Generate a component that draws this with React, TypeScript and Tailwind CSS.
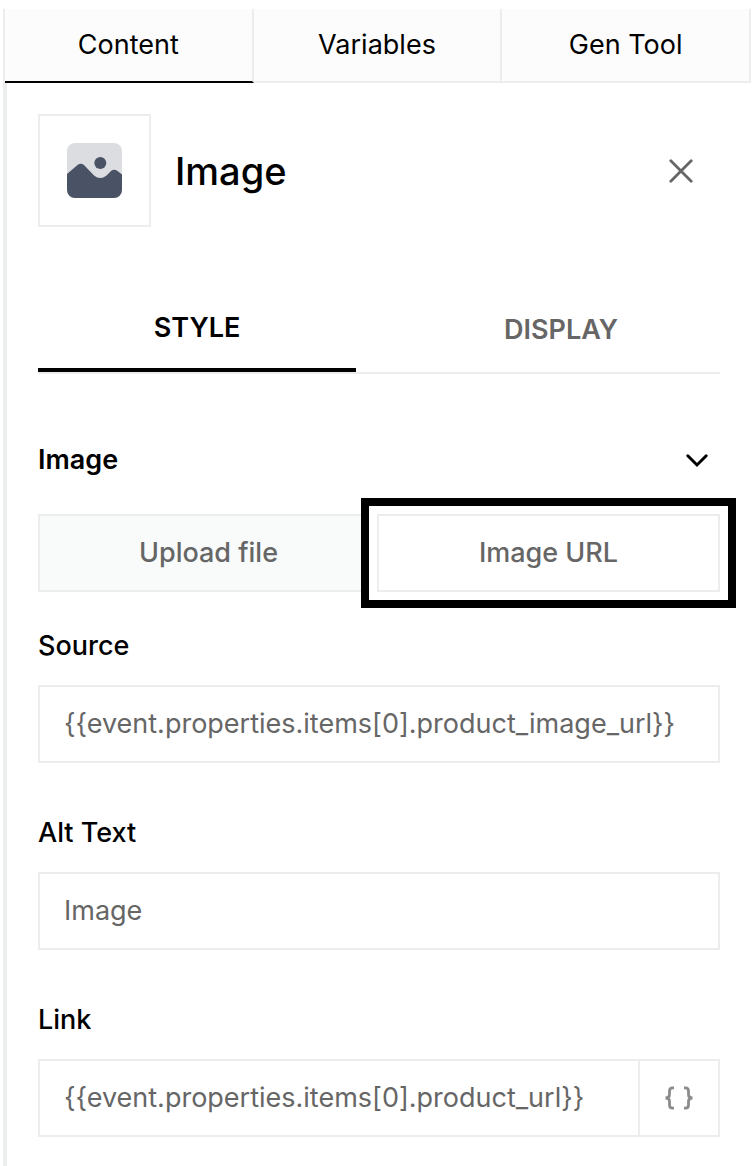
import { useState } from 'react'

const TABS = ['Content', 'Variables', 'Gen Tool']

function ImageGlyph() {
  return (
    <svg className="w-[55px] h-[55px]" viewBox="0 0 55 55" aria-hidden="true">
      <rect width="55" height="55" rx="8" fill="#dcdde0" />
      <path
        d="M0 31 L10.500 22 Q13.700 19.500 17 22 L27 32.500 Q33.300 37.500 39.500 32.500 L44 28 Q47.300 25.300 50.500 28 L55 31.500 V47 A8 8 0 0 1 47 55 H8 A8 8 0 0 1 0 47 Z"
        fill="#4a5365"
      />
      <circle cx="33.300" cy="20" r="6" fill="#4a5365" />
    </svg>
  )
}

function CloseIcon() {
  return (
    <svg className="w-6 h-6" viewBox="0 0 24 24" fill="none" stroke="#666" strokeWidth="2.8" strokeLinecap="round" aria-hidden="true">
      <path d="M1.800 1.800 L22.200 22.200 M22.200 1.800 L1.800 22.200" />
    </svg>
  )
}

function ChevronIcon() {
  return (
    <svg className="w-6 h-6" viewBox="0 0 24 24" fill="none" stroke="#000" strokeWidth="3" strokeLinecap="round" aria-hidden="true">
      <path d="M2.800 7.800 L12 17 L21.200 7.800" />
    </svg>
  )
}

function BracesIcon() {
  return (
    <svg className="w-[30px] h-6" viewBox="0 0 30 24" fill="none" stroke="#8c8c8c" strokeWidth="2.8" aria-hidden="true">
      <path d="M10 1.800 H8.500 Q5.500 1.800 5.500 5 V8.500 Q5.500 12 1.500 12 Q5.500 12 5.500 15.500 V19 Q5.500 22.200 8.500 22.200 H10" />
      <path d="M20 1.800 H21.500 Q24.500 1.800 24.500 5 V8.500 Q24.500 12 28.500 12 Q24.500 12 24.500 15.500 V19 Q24.500 22.200 21.500 22.200 H20" />
    </svg>
  )
}

interface FieldProps {
  id: string
  label: string
  initial: string
  withVariables?: boolean
}

function Field({ id, label, initial, withVariables }: FieldProps) {
  const [value, setValue] = useState(initial)

  return (
    <div className="flex flex-col gap-5">
      <label htmlFor={id} className="leading-[38px] font-medium">{label}</label>
      <div className="flex h-[78px] border-2 border-[#eceded]">
        <input
          id={id}
          type="text"
          value={value}
          onChange={e => setValue(e.target.value)}
          className="flex-1 min-w-0 px-6 text-[#666] outline-none"
        />
        {withVariables && (
          <button type="button" aria-label="Insert variable" className="w-20 border-l-2 border-[#eceded] flex items-center justify-center">
            <BracesIcon />
          </button>
        )}
      </div>
    </div>
  )
}

export default function App() {
  return (
    <div className="min-h-screen flex flex-col bg-white px-[3px] pt-[9px] text-[27px] text-black font-['Inter',sans-serif]">
      {/* Top tabs */}
      <nav className="flex h-[74px] border-l-2 border-[#eceded]">
        {TABS.map((tab, i) => (
          <button
            key={tab}
            type="button"
            className={`flex-1 bg-[#fcfcfc] border-r-2 border-b-2 border-r-[#eceded] ${i === 0 ? 'border-b-black' : 'border-b-[#eceded]'}`}
          >
            {tab}
          </button>
        ))}
      </nav>

      <main className="flex-1 border-l-4 border-[#eceded] pl-[31px] pr-[31px] pt-[31px] pb-7">
        {/* Header */}
        <header className="flex items-center">
          <div className="w-[113px] h-[113px] border-2 border-[#eceded] flex items-center justify-center">
            <ImageGlyph />
          </div>
          <h1 className="ml-6 flex-1 text-[38px] leading-none font-medium">Image</h1>
          <button type="button" aria-label="Close" className="mr-[27px]">
            <CloseIcon />
          </button>
        </header>

        {/* Style / Display */}
        <div className="mt-[62px] flex gap-[46px] h-[85px] border-b-2 border-[#eceded] font-semibold">
          <button type="button" className="flex-1 border-b-4 border-black">STYLE</button>
          <button type="button" className="flex-1 text-[#666]">DISPLAY</button>
        </div>

        <section className="mt-[66px]">
          <div className="flex items-center justify-between">
            <h2 className="leading-10 font-semibold">Image</h2>
            <button type="button" aria-label="Collapse section" className="mr-[11px]">
              <ChevronIcon />
            </button>
          </div>

          {/* Source type */}
          <div className="mt-[34px] grid grid-cols-2 h-[78px] font-medium text-[#666]">
            <button type="button" className="border-2 border-[#eceded] bg-[#f9fbfb]">Upload file</button>
            <div className="relative -my-4 -mr-4 -ml-[18px] border-8 border-black bg-white p-2">
              <button type="button" className="w-full h-full border-2 border-[#eceded]">Image URL</button>
            </div>
          </div>

          <div className="mt-[35px] flex flex-col gap-[51px]">
            <Field id="source" label="Source" initial="{{event.properties.items[0].product_image_url}}" />
            <Field id="alt-text" label="Alt Text" initial="Image" />
            <Field id="link" label="Link" initial="{{event.properties.items[0].product_url}}" withVariables />
          </div>
        </section>
      </main>
    </div>
  )
}
